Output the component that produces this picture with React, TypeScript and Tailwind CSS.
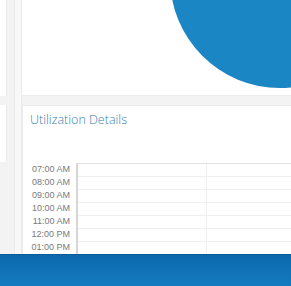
import React from 'react';

const hours = ['07:00 AM', '08:00 AM', '09:00 AM', '10:00 AM', '11:00 AM', '12:00 PM', '01:00 PM'];

const App: React.FC = () => {
  return (
    <div className="relative w-[291px] h-[286px] overflow-hidden bg-[#f3f3f3] flex flex-col" style={{ fontFamily: '"Liberation Sans", Arial, sans-serif' }}>
      <div className="flex h-[254px] shrink-0 overflow-hidden">
        {/* left column */}
        <div className="w-[7px] flex flex-col gap-[9px] shrink-0">
          <div className="h-[96px] shrink-0 bg-white border-r border-[#ececec]" />
          <div className="h-[57px] shrink-0 bg-white border-r border-[#ececec]" />
        </div>
        <div className="w-[7px] shrink-0" />
        <div className="w-[8px] bg-[#f8f8f8] border-x border-[#ebebeb] shrink-0" />

        {/* main column */}
        <div className="flex-1 flex flex-col gap-[9px] min-h-0">
          <div className="relative h-[96px] shrink-0 bg-white border-b border-[#ebebeb] overflow-hidden">
            {/* decorative blob */}
            <div className="absolute left-[148px] top-[-132px] w-[220px] h-[220px] rounded-full bg-[#1a86c4]" />
          </div>

          <div className="flex-1 min-h-0 overflow-hidden bg-white border-t border-l border-[#ebebeb] pl-[7px] pt-[5px] flex flex-col">
            <h2 className="text-[12.5px] leading-[17px] font-light text-[#3a80b6]" style={{ fontFamily: '"Open Sans", sans-serif' }}>
              Utilization Details
            </h2>
            <div className="mt-[35px] flex shrink-0">
              <div className="w-[41px] flex flex-col items-end pr-[1px]">
                {hours.map((h) => (
                  <div key={h} className="h-[13px] leading-[13px] text-[9px] text-[#7a7a7a]">
                    {h}
                  </div>
                ))}
              </div>
              <div className="ml-[5px] flex-1 border-l-2 border-[#d6d6d6] border-t border-t-[#e3e3e3] flex flex-col">
                {hours.map((h) => (
                  <div key={h} className="h-[13px] border-b border-[#efefef] flex">
                    <div className="w-[129px] border-r border-[#f0f0f0]" />
                    <div className="flex-1" />
                  </div>
                ))}
              </div>
            </div>
          </div>
        </div>
      </div>

      {/* footer bar */}
      <div className="h-[32px] bg-gradient-to-b from-[#0c68ad] to-[#157bc0] border-t border-[#0a5a98]" />
    </div>
  );
};

export default App;
